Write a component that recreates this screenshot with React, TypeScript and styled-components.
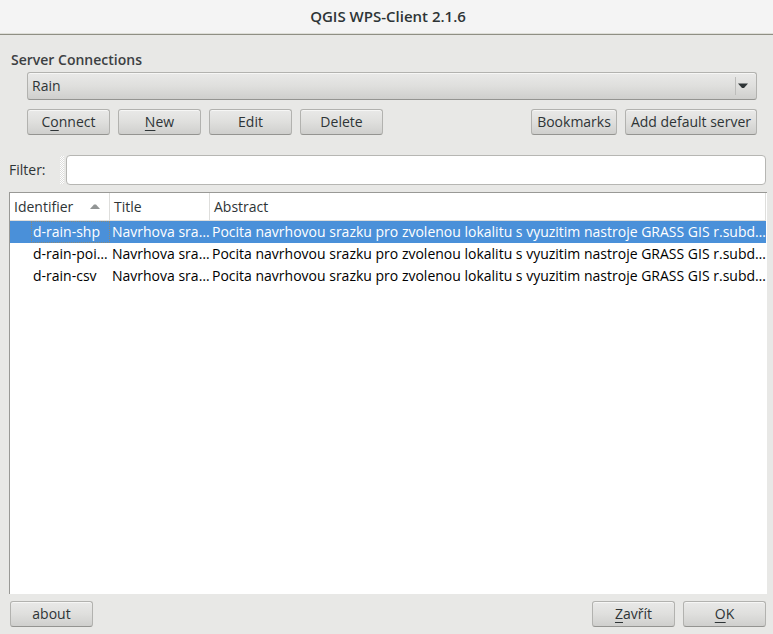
import React, { useState } from "react";
import styled, { createGlobalStyle } from "styled-components";

const GlobalStyle = createGlobalStyle`
  *, *::before, *::after { box-sizing: border-box; }
  body {
    margin: 0;
    background: #e8e8e6;
    color: #2e3436;
    font-family: "Open Sans", "Noto Sans", sans-serif;
    font-size: 14px;
    line-height: 20px;
  }
  button, input, select { font: inherit; color: inherit; }
`;

const Dialog = styled.div`
  display: flex;
  flex-direction: column;
  min-height: 100vh;
`;

const TitleBar = styled.header`
  display: flex;
  align-items: center;
  justify-content: center;
  height: 35px;
  padding: 0 0 3px 3px;
  background: #f4f4f4;
  border-bottom: 1px solid #8f8f84;
  box-shadow: inset 0 -1px 0 #deded8;
`;

const Title = styled.h1`
  margin: 0;
  font-size: 15px;
  line-height: 20px;
  font-weight: 600;
`;

const Content = styled.main`
  display: flex;
  flex-direction: column;
  flex: 1;
  padding: 15px 6px 7px 9px;
`;

const Group = styled.section`
  display: flex;
  flex-direction: column;
  padding: 0 10px 0 18px;
`;

const GroupTitle = styled.h2`
  margin: 0 0 2px -16px;
  color: #3c4042;
  font-size: 14px;
  line-height: 20px;
  font-weight: 600;
`;

const raised = `
  border: 1px solid #b2b2af;
  border-bottom-color: #949491;
  border-radius: 3px;
  background: linear-gradient(#e9e9e8, #dfdfdd 50%, #cfcfcd);
  box-shadow: inset 0 1px 0 #f6f6f5;
`;

const Combo = styled.div`
  ${raised}
  display: grid;
  grid-template-columns: 1fr 21px;
  align-items: center;
  height: 28px;
`;

const ComboSelect = styled.select`
  grid-area: 1 / 1 / 2 / 3;
  width: 100%;
  height: 26px;
  padding: 0 24px 0 4px;
  border: 0;
  background: transparent;
  appearance: none;
`;

const ComboArrow = styled.span`
  grid-area: 1 / 2;
  display: flex;
  align-items: center;
  height: 18px;
  padding-left: 2px;
  border-left: 1px solid #bdbdbb;
  pointer-events: none;
`;

const ButtonRow = styled.div`
  display: flex;
  gap: 8px;
  margin-top: 9px;
`;

const Footer = styled.footer`
  display: flex;
  gap: 8px;
  padding: 7px 1px 0;
`;

const Spacer = styled.span`
  flex: 1;
`;

const Button = styled.button`
  ${raised}
  min-width: 83px;
  height: 26px;
  padding: 0 5px;
  line-height: 20px;
  white-space: nowrap;
`;

const Mnemonic = styled.span`
  text-decoration: underline;
  text-decoration-thickness: 1px;
  text-underline-offset: 3px;
  text-decoration-skip-ink: none;
`;

const FilterBar = styled.div`
  display: flex;
  align-items: center;
  margin: 20px 1px 7px 0;
`;

const FilterLabel = styled.label`
  width: 51px;
`;

const Grip = styled.span`
  width: 4px;
  height: 28px;
  margin-right: 2px;
  background: repeating-conic-gradient(#fff 0 25%, #dededc 0 50%) 0 0 / 2px 2px;
`;

const FilterInput = styled.input`
  flex: 1;
  min-width: 0;
  height: 30px;
  padding: 0 6px;
  border: 1px solid #b6b6b3;
  border-radius: 4px;
  background: #fff;
`;

const TreeFrame = styled.div`
  flex: 1;
  padding-right: 1px;
  border-top: 1px solid #999996;
  border-left: 1px solid #999996;
  background: #fff;
`;

const Tree = styled.table`
  width: 100%;
  table-layout: fixed;
  border-collapse: separate;
  border-spacing: 0;
`;

const HeadCell = styled.th<{ $width?: number }>`
  width: ${(p) => (p.$width ? `${p.$width}px` : "auto")};
  height: 28px;
  padding: 0 9px 0 4px;
  border-right: 1px solid #dededc;
  border-bottom: 1px solid #dededc;
  font-weight: 400;
  text-align: left;
`;

const HeadInner = styled.span`
  display: flex;
  align-items: center;
  justify-content: space-between;
`;

const Row = styled.tr<{ $selected: boolean }>`
  background: ${(p) => (p.$selected ? "#4a90d9" : "transparent")};
  color: ${(p) => (p.$selected ? "#fff" : "#000")};
`;

const Cell = styled.td<{ $indent?: boolean }>`
  height: 22px;
  padding: 0 0 0 ${(p) => (p.$indent ? 21 : 2)}px;
  white-space: nowrap;
`;

const CellText = styled.span<{ $focus?: boolean }>`
  display: block;
  height: 22px;
  padding-left: ${(p) => (p.$focus === undefined ? 0 : 2)}px;
  outline: ${(p) => (p.$focus ? "1px dotted #8a8a7c" : "none")};
  outline-offset: -1px;
  line-height: 22px;
`;

const abstract =
  "Pocita navrhovou srazku pro zvolenou lokalitu s vyuzitim nastroje GRASS GIS r.subd…";

const processes = [
  { id: "d-rain-shp", title: "Navrhova sra…", abstract },
  { id: "d-rain-poi…", title: "Navrhova sra…", abstract },
  { id: "d-rain-csv", title: "Navrhova sra…", abstract },
];

export default function App() {
  const [selected, setSelected] = useState("d-rain-shp");
  return (
    <>
      <GlobalStyle />
      <Dialog>
        <TitleBar>
          <Title>QGIS WPS-Client 2.1.6</Title>
        </TitleBar>
        <Content>
          <Group>
            <GroupTitle id="connections">Server Connections</GroupTitle>
            <Combo>
              <ComboSelect aria-labelledby="connections" defaultValue="Rain">
                <option>Rain</option>
              </ComboSelect>
              <ComboArrow>
                <svg width="11" height="6" viewBox="0 0 11 6" aria-hidden="true">
                  <path d="M0 0.5H10L6 5H4Z" fill="#2e3436" />
                </svg>
              </ComboArrow>
            </Combo>
            <ButtonRow>
              <Button>C<Mnemonic>o</Mnemonic>nnect</Button>
              <Button><Mnemonic>N</Mnemonic>ew</Button>
              <Button>Edit</Button>
              <Button>Delete</Button>
              <Spacer />
              <Button>Bookmarks</Button>
              <Button>Add default server</Button>
            </ButtonRow>
          </Group>
          <FilterBar>
            <FilterLabel htmlFor="filter">Filter:</FilterLabel>
            <Grip />
            <FilterInput id="filter" type="text" />
          </FilterBar>
          <TreeFrame>
            <Tree>
              <thead>
                <tr>
                  <HeadCell $width={100} aria-sort="ascending">
                    <HeadInner>
                      Identifier
                      <svg width="10" height="5" viewBox="0 0 10 5" aria-hidden="true">
                        <path d="M0 5L4 0.5H6L10 5Z" fill="#929595" />
                      </svg>
                    </HeadInner>
                  </HeadCell>
                  <HeadCell $width={100}>Title</HeadCell>
                  <HeadCell>Abstract</HeadCell>
                </tr>
              </thead>
              <tbody>
                {processes.map((p) => (
                  <Row key={p.id} $selected={p.id === selected} onClick={() => setSelected(p.id)}>
                    <Cell $indent>
                      <CellText $focus={p.id === selected}>{p.id}</CellText>
                    </Cell>
                    <Cell><CellText>{p.title}</CellText></Cell>
                    <Cell><CellText>{p.abstract}</CellText></Cell>
                  </Row>
                ))}
              </tbody>
            </Tree>
          </TreeFrame>
          <Footer>
            <Button>about</Button>
            <Spacer />
            <Button><Mnemonic>Z</Mnemonic>avřít</Button>
            <Button><Mnemonic>O</Mnemonic>K</Button>
          </Footer>
        </Content>
      </Dialog>
    </>
  );
}
